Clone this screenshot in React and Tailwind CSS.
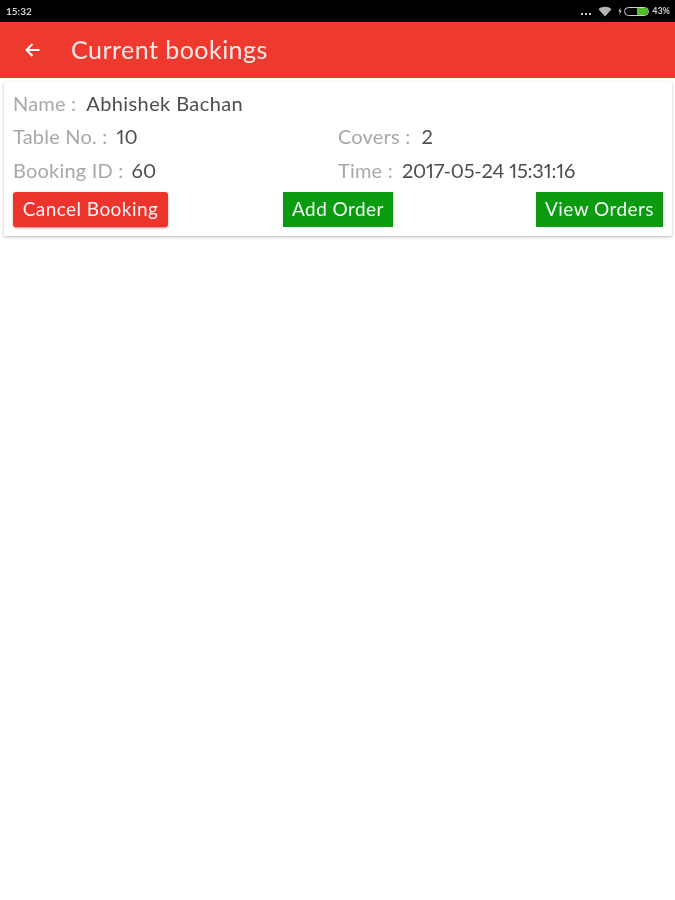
import React from "react";

function Field({ label, value, gap = "mr-[8px]", valueClass = "" }) {
  return (
    <div className="flex items-center h-[33.5px] text-[20px] tracking-[0.2px] proportional-nums">
      <span className={`text-[#a8a8a8] ${gap}`}>{label}</span>
      <span className={`text-[#4d4d4d] ${valueClass}`}>{value}</span>
    </div>
  );
}

export default function App() {
  return (
    <div className="min-h-[900px] bg-white font-['Lato','Liberation_Sans',sans-serif] blur-[0.4px]">
      <div className="h-[22px] bg-black flex items-center justify-between pl-[6px] pr-[5px] text-[#cfcfcf] text-[10px] font-bold">
        <span>15:32</span>
        <div className="flex items-center">
          <div className="flex gap-[2px] mr-[7px] mt-[5px]">
            <span className="w-[2px] h-[2px] bg-[#cfcfcf]" />
            <span className="w-[2px] h-[2px] bg-[#cfcfcf]" />
            <span className="w-[2px] h-[2px] bg-[#cfcfcf]" />
          </div>
          <svg width="14" height="11" viewBox="0 0 14 11" className="mr-[6px]">
            <path d="M0.5 3.2C4.2 0 9.8 0 13.5 3.2L7 10.5Z" fill="#b5b5b5" />
          </svg>
          <svg width="4" height="8" viewBox="0 0 4 8" className="mr-[2px]">
            <path d="M2.6 0L0.5 4.4H1.8L1.3 8L3.6 3.4H2.2Z" fill="#cfcfcf" />
          </svg>
          <div className="w-[25px] h-[9px] rounded-full border border-[#cfcfcf] mr-[3px] flex justify-end overflow-hidden">
            <span className="w-[11px] h-full bg-[#4fc02a]" />
          </div>
          <span className="text-[9px]">43%</span>
        </div>
      </div>
      <header className="h-[56px] bg-[#ee3a2e] flex items-center pl-[24px] text-white border-b border-[#e0352a]">
        <svg width="18" height="18" viewBox="0 0 18 18" fill="none" stroke="white" strokeWidth="2" className="mr-[29px]">
          <path d="M15.5 9H2.5M8.5 3L2.5 9L8.5 15" />
        </svg>
        <h1 className="text-[25px] font-normal tracking-[0.47px] text-[#ffe9e6]">Current bookings</h1>
      </header>
      <main className="pt-[4px] pl-[4px] pr-[3px]">
        <section className="h-[154px] rounded-[2px] shadow-[0_1px_3px_rgba(0,0,0,0.28)] px-[9px] pt-[4px]">
          <Field label="Name :" value="Abhishek Bachan" gap="mr-[10px]" valueClass="tracking-[0.4px]" />
          <div className="grid grid-cols-[325px_1fr]">
            <Field label="Table No. :" value="10" gap="mr-[9px]" />
            <Field label="Covers :" value="2" gap="mr-[10px]" valueClass="ml-[1px]" />
            <Field label="Booking ID :" value="60" />
            <Field label="Time :" value="2017-05-24 15:31:16" gap="mr-[9px]" valueClass="tracking-[-0.2px]" />
          </div>
          <div className="grid grid-cols-3 mt-[5px] text-[19px] text-[#f4f4f4] tracking-[0.45px]">
            <button className="justify-self-start w-[155px] h-[35px] rounded-[3px] bg-[#ec342c] shadow-[0_1px_2px_rgba(180,0,0,0.5)]">Cancel Booking</button>
            <button className="justify-self-center w-[110px] h-[35px] bg-[#0b9a10]">Add Order</button>
            <button className="justify-self-end w-[127px] h-[35px] bg-[#0b9a10]">View Orders</button>
          </div>
        </section>
      </main>
    </div>
  );
}
